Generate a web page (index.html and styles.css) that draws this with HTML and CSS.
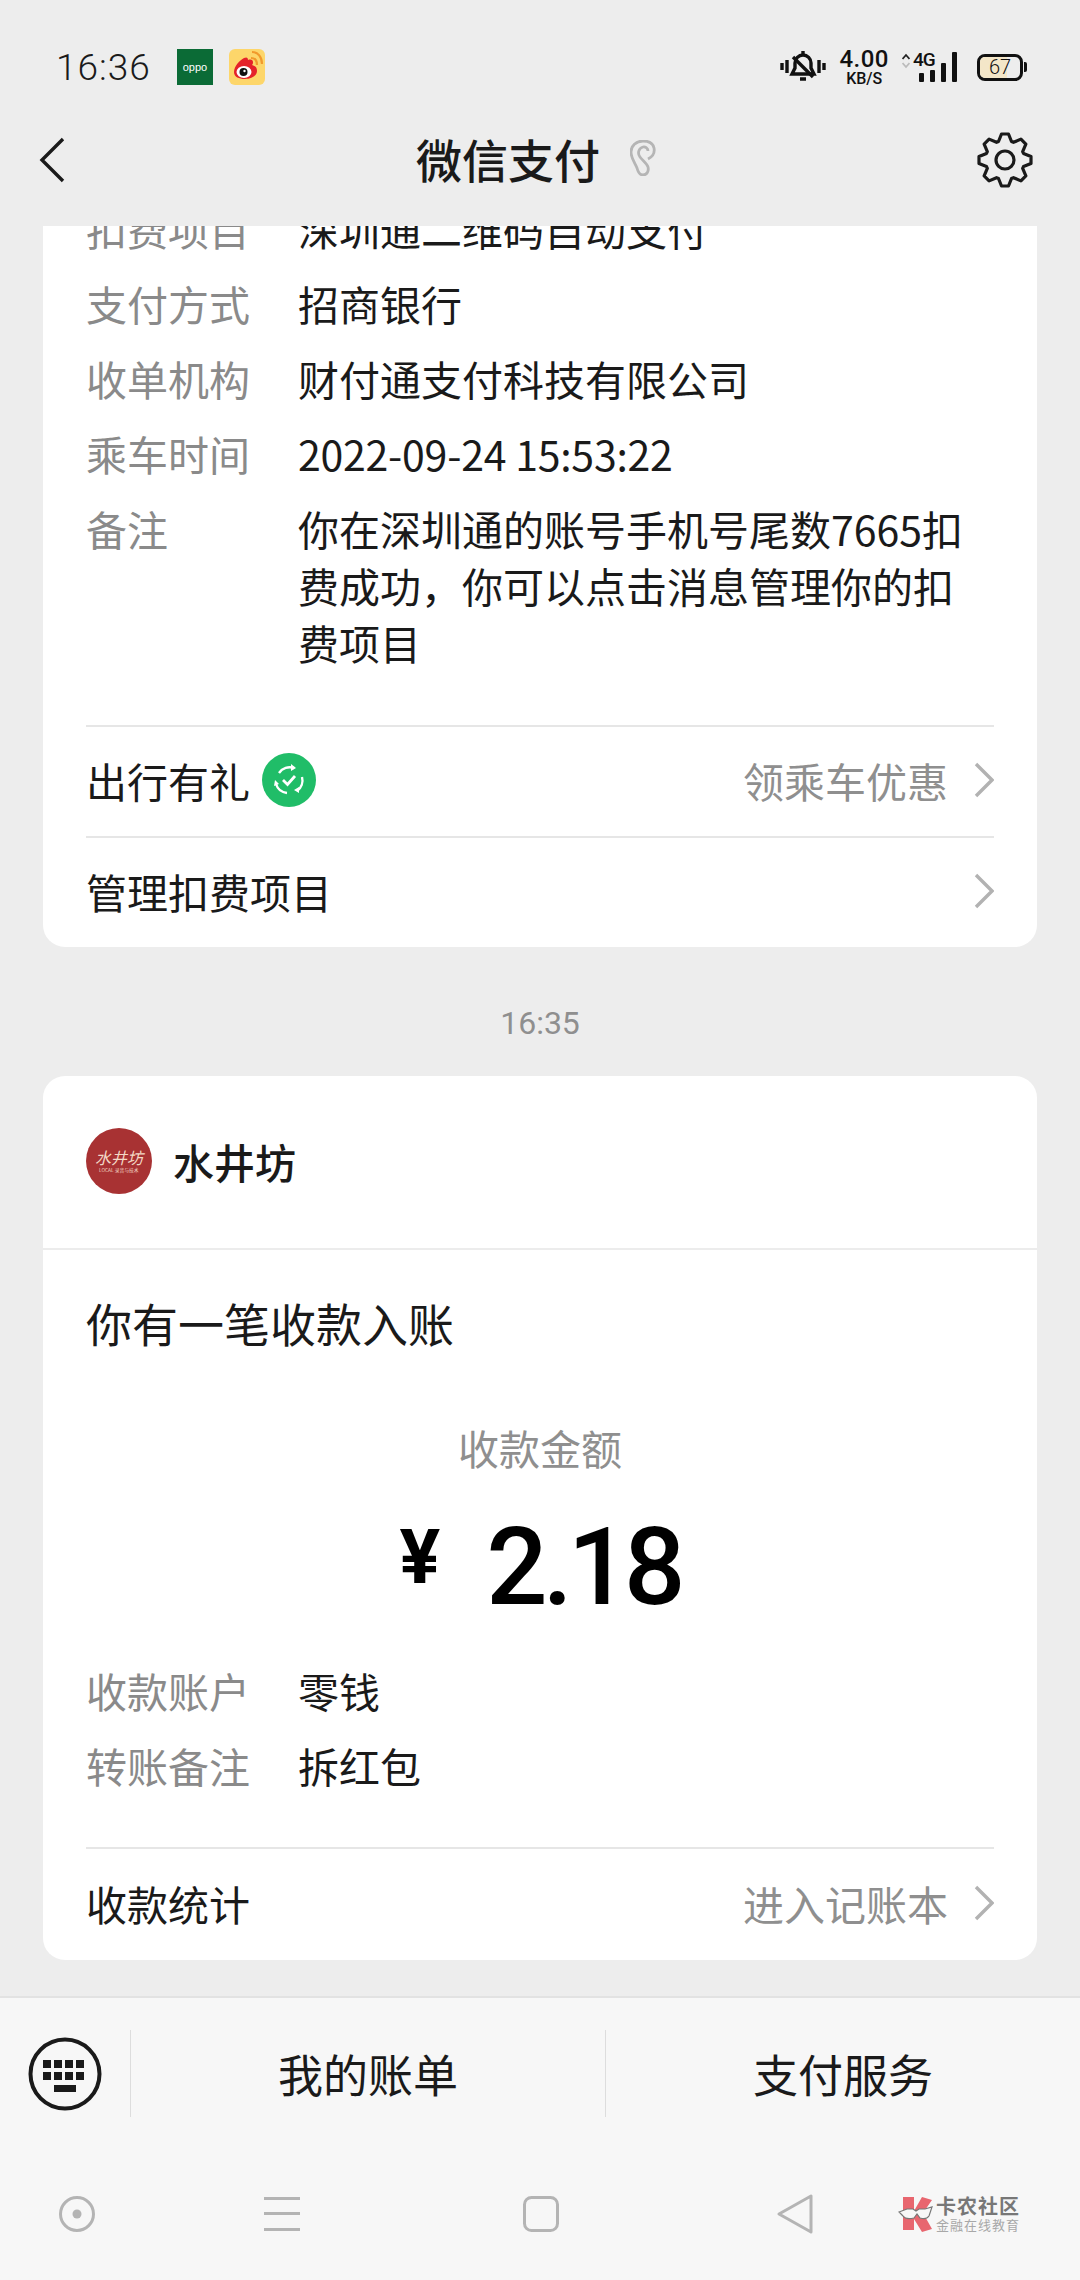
FILE: index.html
```html
<!DOCTYPE html>
<html lang="zh-CN">
<head>
  <meta charset="UTF-8">
  <meta name="viewport" content="width=device-width, initial-scale=1.0">
  <title>微信支付</title>
  <link rel="stylesheet" href="styles.css">
</head>
<body>
  <div class="status-bar">
    <span class="clock">16:36</span>
    <div class="oppo-icon">oppo</div>
    <svg class="weibo-icon" width="36" height="36" viewBox="0 0 36 36">
      <rect width="36" height="36" rx="6" fill="#fdd66a"/>
      <path d="M15 9c2-1 4-1 4 2 3-1 5 0 5 2 0 1 0 2-1 3 3 1 5 2 5 6 0 5-6 8-12 8S5 28 5 23c0-6 6-12 10-14z" fill="#e5222a"/>
      <ellipse cx="15" cy="23" rx="7.500" ry="6" fill="#fff"/>
      <circle cx="14.500" cy="23" r="4" fill="#111"/>
      <circle cx="15.500" cy="22" r="1.200" fill="#fff"/>
      <path d="M22 9c4 0 6 3 6 7M23 3c6 0 10 5 10 12" fill="none" stroke="#f19a2c" stroke-width="2.200"/>
    </svg>
    <div class="status-right">
      <svg width="46" height="32" viewBox="0 0 46 32" fill="none" stroke="#111" stroke-width="3.400">
        <path d="M2 12v7M7 9v13M39 9v13M44 12v7"/>
        <path d="M23 4a8 8 0 0 1 8 8v5l3 6H12l3-6v-5a8 8 0 0 1 8-8z"/>
        <path d="M13 6l20 20"/>
        <path d="M23 0v4M20 28h6"/>
      </svg>
      <div class="net-speed">
        <span class="net-num">4.00</span>
        <span class="net-unit">KB/S</span>
      </div>
      <div class="signal">
        <svg class="signal-arrows" width="8" height="16" viewBox="0 0 8 16">
          <path d="M0.500 6L4 2l3.500 4" fill="none" stroke="#222" stroke-width="1.800"/>
          <path d="M0.500 10L4 14l3.500-4" fill="none" stroke="#bbb" stroke-width="1.800"/>
        </svg>
        <div class="signal-bars">
          <span class="signal-type">4G</span>
          <i class="bar-1"></i><i class="bar-2"></i><i class="bar-3"></i><i class="bar-4"></i>
        </div>
      </div>
      <div class="battery">
        <div class="battery-body"><div class="battery-fill" style="width: 67%"></div><span>67</span></div>
        <div class="battery-cap"></div>
      </div>
    </div>
  </div>

  <div class="nav-bar">
    <svg class="back-icon" width="28" height="46" viewBox="0 0 28 46" fill="none" stroke="#1a1a1a" stroke-width="3.400">
      <path d="M25 2L4 23l21 21"/>
    </svg>
    <div class="nav-title">
      <span>微信支付</span>
      <svg class="ear-icon" width="26" height="36" viewBox="0 0 26 36" fill="none" stroke="#b5b5b5" stroke-width="2.800">
        <path d="M18 19C22 17 25 13 24 8C23 3 18 1 13 1C6 1 1 6 1 12C1 18 5 23 7 28C8 32 10 35 13 35C17 35 19 31 18 27C17 23 13 21 10 17C7 13 9 8 13 7C15 6.500 18 8 18 11"/>
      </svg>
    </div>
    <svg class="gear-icon" width="60" height="60" viewBox="-30 -30 60 60" fill="none" stroke="#1a1a1a" stroke-width="3.200" stroke-linejoin="round">
      <circle r="9"/>
      <path d="M-6.500-18.500L-3.500-26H3.500L6.500-18.500L8.490-17.670L15.910-20.860L20.860-15.910L17.670-8.490L18.500-6.500L26-3.500V3.500L18.500 6.500L17.670 8.490L20.860 15.910L15.910 20.860L8.490 17.670L6.500 18.500L3.500 26H-3.500L-6.500 18.500L-8.490 17.670L-15.910 20.860L-20.860 15.910L-17.670 8.490L-18.500 6.500L-26 3.500V-3.500L-18.500-6.500L-17.670-8.490L-20.860-15.910L-15.910-20.860L-8.490-17.670z"/>
    </svg>
  </div>

  <div class="messages">
    <div class="card card-first">
      <div class="info-list">
        <div class="info-row"><span class="info-label">扣费项目</span><span class="info-value">深圳通二维码自动支付</span></div>
        <div class="info-row"><span class="info-label">支付方式</span><span class="info-value">招商银行</span></div>
        <div class="info-row"><span class="info-label">收单机构</span><span class="info-value">财付通支付科技有限公司</span></div>
        <div class="info-row"><span class="info-label">乘车时间</span><span class="info-value info-date">2022-09-24 15:53:22</span></div>
        <div class="info-row"><span class="info-label">备注</span><span class="info-value">你在深圳通的账号手机号尾数7665扣费成功，你可以点击消息管理你的扣费项目</span></div>
      </div>
      <div class="link-row link-first">
        <span class="link-name">出行有礼</span>
        <svg class="green-badge" width="54" height="54" viewBox="0 0 54 54">
          <circle cx="27" cy="27" r="27" fill="#20bd68"/>
          <path d="M17 20a13 13 0 0 1 15-5M40 24a13 13 0 0 1-5 14M14 31a13 13 0 0 0 11 9" fill="none" stroke="#fff" stroke-width="2.400"/>
          <path d="M29 11l5 4-5 3zM37 40l-5-3 5-3zM13 27l4 4-5 2z" fill="#fff"/>
          <path d="M21 27l4.500 4.500L33 23" fill="none" stroke="#fff" stroke-width="2.800"/>
        </svg>
        <span class="link-hint">领乘车优惠</span>
        <svg class="chevron" width="20" height="36" viewBox="0 0 20 36" fill="none" stroke="#b2b2b2" stroke-width="3.400">
          <path d="M2 2l16 16L2 34"/>
        </svg>
      </div>
      <div class="link-row">
        <span class="link-name">管理扣费项目</span>
        <svg class="chevron push-right" width="20" height="36" viewBox="0 0 20 36" fill="none" stroke="#b2b2b2" stroke-width="3.400">
          <path d="M2 2l16 16L2 34"/>
        </svg>
      </div>
    </div>

    <div class="msg-time">16:35</div>

    <div class="card">
      <div class="shop-head">
        <div class="shop-avatar">
          <span class="avatar-name">水井坊</span>
          <span class="avatar-sub">LOCAL 录音与技术</span>
        </div>
        <span class="shop-name">水井坊</span>
      </div>
      <div class="pay-title">你有一笔收款入账</div>
      <div class="pay-label">收款金额</div>
      <div class="pay-amount"><span class="yen">¥</span><span class="amount-num">2.18</span></div>
      <div class="info-list pay-info">
        <div class="info-row"><span class="info-label">收款账户</span><span class="info-value">零钱</span></div>
        <div class="info-row"><span class="info-label">转账备注</span><span class="info-value">拆红包</span></div>
      </div>
      <div class="link-row link-stats">
        <span class="link-name">收款统计</span>
        <span class="link-hint">进入记账本</span>
        <svg class="chevron" width="20" height="36" viewBox="0 0 20 36" fill="none" stroke="#b2b2b2" stroke-width="3.400">
          <path d="M2 2l16 16L2 34"/>
        </svg>
      </div>
    </div>
  </div>

  <div class="bottom-panel">
    <div class="menu-bar">
      <div class="keyboard-btn">
        <svg width="74" height="74" viewBox="0 0 74 74">
          <circle cx="37" cy="37" r="34.500" fill="none" stroke="#1a1a1a" stroke-width="4"/>
          <g fill="#1a1a1a">
            <rect x="15" y="23" width="8" height="8"/><rect x="26" y="23" width="8" height="8"/><rect x="37" y="23" width="8" height="8"/><rect x="48" y="23" width="8" height="8"/>
            <rect x="15" y="35" width="8" height="8"/><rect x="26" y="35" width="8" height="8"/><rect x="37" y="35" width="8" height="8"/><rect x="48" y="35" width="8" height="8"/>
            <rect x="26" y="48" width="22" height="7"/>
          </g>
        </svg>
      </div>
      <div class="menu-item">我的账单</div>
      <div class="menu-item">支付服务</div>
    </div>
    <div class="sys-nav">
      <svg class="sys-circle" width="36" height="36" viewBox="0 0 36 36">
        <circle cx="18" cy="18" r="16.500" fill="none" stroke="#b4b4b4" stroke-width="3"/>
        <circle cx="18" cy="18" r="4.500" fill="#b4b4b4"/>
      </svg>
      <svg class="sys-menu" width="36" height="34" viewBox="0 0 36 34" fill="#b4b4b4">
        <rect y="0" width="36" height="3"/><rect y="15" width="36" height="3"/><rect y="31" width="36" height="3"/>
      </svg>
      <svg class="sys-square" width="36" height="36" viewBox="0 0 36 36">
        <rect x="1.500" y="1.500" width="33" height="33" rx="7" fill="none" stroke="#b4b4b4" stroke-width="3"/>
      </svg>
      <svg class="sys-back" width="38" height="42" viewBox="0 0 38 42">
        <path d="M35 3v36L3 21z" fill="none" stroke="#b4b4b4" stroke-width="3" stroke-linejoin="round"/>
      </svg>
    </div>
    <div class="watermark">
      <svg width="36" height="36" viewBox="0 0 36 36">
        <path d="M5 1h11v14l8-14 10 3-9 13 9 16-10 3-8-13v11H5z" fill="#e8666f"/>
        <path d="M1 16l8-3h6l3 2 3-2h6l7-2-3 9c-2 3-6 3-9 2l-3-4-3 4c-4 1-9 1-11-2z" fill="#f7f7f7" stroke="#777" stroke-width="1.200"/>
      </svg>
      <div class="watermark-text">
        <span class="watermark-name">卡农社区</span>
        <span class="watermark-sub">金融在线教育</span>
      </div>
    </div>
  </div>
</body>
</html>
```

FILE: styles.css
```css
* {
  box-sizing: border-box;
  margin: 0;
  padding: 0;
}

body {
  width: 1080px;
  height: 2280px;
  background: #ededed;
  color: #1a1a1a;
  font-family: "Noto Sans CJK SC", "Noto Sans", sans-serif;
  display: flex;
  flex-direction: column;
  position: relative;
  overflow: hidden;
}

.status-bar {
  height: 120px;
  padding: 14px 53px 0 56px;
  display: flex;
  align-items: center;
  flex-shrink: 0;
}

.clock {
  font-family: Roboto, sans-serif;
  font-weight: 300;
  font-size: 37px;
  letter-spacing: 1px;
  width: 121px;
}

.oppo-icon {
  width: 36px;
  height: 36px;
  background: #0b6b36;
  color: #ffffff;
  font-family: "Liberation Sans", sans-serif;
  font-size: 11px;
  line-height: 36px;
  text-align: center;
}

.weibo-icon {
  margin-left: 16px;
}

.status-right {
  margin-left: auto;
  display: flex;
  align-items: center;
}

.net-speed {
  margin-left: 13px;
  display: flex;
  flex-direction: column;
  align-items: center;
  font-family: Roboto, sans-serif;
  font-weight: 500;
  color: #111111;
}

.net-num {
  font-size: 24px;
  line-height: 23px;
  letter-spacing: 0.5px;
}

.net-unit {
  font-size: 16px;
  line-height: 15px;
}

.signal {
  margin-left: 13px;
  display: flex;
  align-items: flex-start;
  height: 30px;
}

.signal-arrows {
  margin-top: 1px;
}

.signal-bars {
  margin-left: 9px;
  display: flex;
  align-items: flex-end;
  gap: 6px;
  height: 30px;
  position: relative;
}

.signal-type {
  position: absolute;
  left: -6px;
  top: 0;
  font-family: Roboto, sans-serif;
  font-weight: 500;
  font-size: 19px;
  line-height: 15px;
  letter-spacing: -1px;
  color: #111111;
}

.signal-bars i {
  display: block;
  width: 5px;
  background: #111111;
  border-radius: 1px;
}

.bar-1 { height: 9px; }
.bar-2 { height: 12px; }
.bar-3 { height: 19px; }
.bar-4 { height: 30px; }

.battery {
  margin-left: 20px;
  display: flex;
  align-items: center;
}

.battery-body {
  width: 46px;
  height: 27px;
  border: 3px solid #111111;
  border-radius: 8px;
  position: relative;
  overflow: hidden;
}

.battery-fill {
  height: 100%;
  background: #f3e6c8;
}

.battery-body span {
  position: absolute;
  left: 0;
  right: 0;
  top: 0;
  text-align: center;
  font-family: Roboto, sans-serif;
  font-weight: 300;
  font-size: 20px;
  line-height: 21px;
  color: #111111;
}

.battery-cap {
  width: 3px;
  height: 10px;
  margin-left: 1px;
  background: #111111;
  border-radius: 0 2px 2px 0;
}

.nav-bar {
  height: 106px;
  padding: 0 45px 26px 38px;
  display: flex;
  align-items: center;
  justify-content: space-between;
  flex-shrink: 0;
  position: relative;
}

.nav-title {
  position: absolute;
  left: 416px;
  top: 8px;
  display: flex;
  align-items: center;
  gap: 30px;
  font-size: 46px;
  line-height: 60px;
  font-weight: 500;
  color: #1a1a1a;
}

.messages {
  height: 1770px;
  padding: 0 43px;
  overflow: hidden;
  flex-shrink: 0;
}

.card {
  background: #ffffff;
  border-radius: 22px;
  padding: 0 43px;
}

.card-first {
  margin-top: -26px;
}

.info-list {
  display: flex;
  flex-direction: column;
  gap: 18px;
}

.info-row {
  display: flex;
  font-size: 41px;
  line-height: 57px;
}

.info-label {
  width: 212px;
  flex-shrink: 0;
  color: #8a8a8a;
}

.info-value {
  color: #1a1a1a;
}

.info-date {
  letter-spacing: -0.23px;
}

.link-row {
  height: 111px;
  padding-bottom: 4px;
  border-top: 2px solid #e6e6e6;
  display: flex;
  align-items: center;
  font-size: 41px;
  color: #1a1a1a;
}

.link-first {
  margin-top: 54px;
}

.link-name {
  white-space: nowrap;
}

.green-badge {
  margin-left: 12px;
}

.link-hint {
  margin-left: auto;
  color: #8f8f8f;
}

.chevron {
  margin-left: 26px;
}

.push-right {
  margin-left: auto;
}

.msg-time {
  height: 129px;
  padding-top: 23px;
  display: flex;
  align-items: center;
  justify-content: center;
  font-family: Roboto, sans-serif;
  font-size: 32px;
  color: #8f8f8f;
}

.shop-head {
  height: 174px;
  margin: 0 -43px;
  padding: 0 43px 3px;
  border-bottom: 2px solid #ececec;
  display: flex;
  align-items: center;
}

.shop-avatar {
  width: 66px;
  height: 66px;
  border-radius: 50%;
  background: #a83233;
  color: #f3d9c6;
  display: flex;
  flex-direction: column;
  align-items: center;
  justify-content: center;
}

.avatar-name {
  font-size: 16px;
  line-height: 18px;
  font-style: italic;
}

.avatar-sub {
  font-size: 6px;
  line-height: 8px;
  white-space: nowrap;
  transform: scale(0.8);
}

.shop-name {
  margin-left: 21px;
  font-size: 41px;
  font-weight: 500;
  color: #1a1a1a;
}

.pay-title {
  margin-top: 40px;
  font-size: 46px;
  line-height: 64px;
}

.pay-label {
  margin-top: 65px;
  text-align: center;
  font-size: 41px;
  line-height: 56px;
  color: #8f8f8f;
}

.pay-amount {
  margin-top: 32px;
  height: 120px;
  display: flex;
  align-items: center;
  justify-content: center;
  gap: 46px;
  font-family: Roboto, sans-serif;
  color: #000000;
  line-height: 1;
}

.yen {
  font-size: 76px;
  font-weight: 700;
  margin-bottom: 20px;
}

.amount-num {
  font-weight: 500;
  font-size: 108px;
  letter-spacing: -5px;
}

.pay-info {
  margin-top: 35px;
}

.link-stats {
  margin-top: 53px;
  height: 113px;
}

.bottom-panel {
  flex: 1;
  background: #f7f7f7;
  border-top: 2px solid #e2e2e2;
}

.menu-bar {
  margin-top: 32px;
  height: 87px;
  display: flex;
}

.keyboard-btn {
  width: 130px;
  padding-left: 28px;
  display: flex;
  align-items: center;
}

.menu-item {
  flex: 1;
  border-left: 1px solid #dddddd;
  display: flex;
  align-items: center;
  justify-content: center;
  font-size: 45px;
  color: #1a1a1a;
}

.sys-nav {
  margin-top: 76px;
  height: 42px;
  padding-left: 59px;
  display: flex;
  align-items: center;
}

.sys-menu {
  margin-left: 169px;
}

.sys-square {
  margin-left: 223px;
}

.sys-back {
  margin-left: 217px;
}

.watermark {
  position: absolute;
  left: 898px;
  top: 2195px;
  display: flex;
  align-items: center;
  gap: 2px;
}

.watermark-text {
  display: flex;
  flex-direction: column;
}

.watermark-name {
  font-size: 20px;
  line-height: 22px;
  font-weight: 700;
  letter-spacing: 1px;
  color: #777777;
}

.watermark-sub {
  font-size: 13px;
  line-height: 16px;
  letter-spacing: 1px;
  color: #a8a8a8;
}
```
